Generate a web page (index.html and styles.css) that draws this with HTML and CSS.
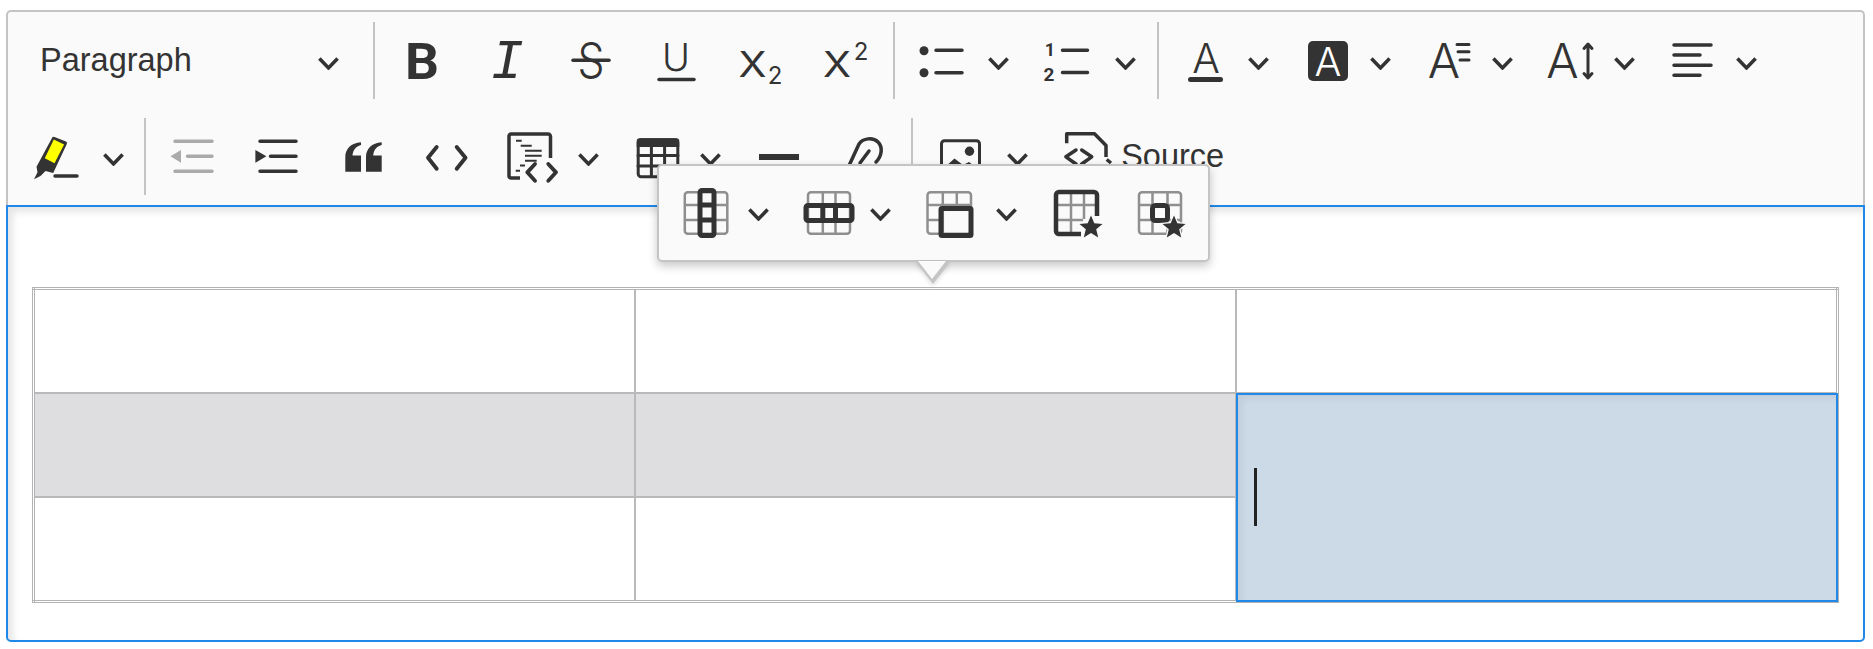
FILE: index.html
```html
<!DOCTYPE html>
<html lang="en">
<head>
    <meta charset="UTF-8">
    <title>Editor</title>
    <link rel="stylesheet" href="styles.css">
</head>
<body>
<svg class="sprite" aria-hidden="true">
    <symbol id="chev" viewBox="0 0 21 13"><path d="M1.400 1.600l9.100 9.300 9.100-9.300"/></symbol>
    <symbol id="star" viewBox="0 0 48 48" overflow="visible"><path class="star" d="M38 26.500l3.300 7.700 8.200.7-6.300 5.400 2 8.100-7.200-4.300-7.200 4.300 2-8.100-6.300-5.400 8.200-.7z"/></symbol>
</svg>

<div class="editor">
    <div class="toolbar">
        <div class="row">
            <div class="heading">
                <span>Paragraph</span>
                <svg class="chev"><use href="#chev"/></svg>
            </div>
            <i class="sep sep-first"></i>
            <div class="group">
                <div class="btn"><svg class="ico"><text class="fb" x="24" y="43" font-size="50" text-anchor="middle" textLength="34" lengthAdjust="spacingAndGlyphs">B</text></svg></div>
                <div class="btn"><svg class="ico"><text class="fi" x="24" y="42" font-size="55" text-anchor="middle">I</text></svg></div>
                <div class="btn"><svg class="ico"><text class="fl" x="24" y="42" font-size="49" text-anchor="middle" textLength="27" lengthAdjust="spacingAndGlyphs">S</text><path class="ln" d="M6 24.300h36"/></svg></div>
                <div class="btn"><svg class="ico"><text class="fl" x="24" y="35" font-size="38" text-anchor="middle">U</text><path class="ln" d="M7 43.500h35"/></svg></div>
                <div class="btn"><svg class="ico"><text class="fn" x="15.500" y="41" font-size="35" text-anchor="middle" textLength="28" lengthAdjust="spacingAndGlyphs">X</text><text class="fn" x="38" y="48" font-size="24" text-anchor="middle">2</text></svg></div>
                <div class="btn"><svg class="ico"><text class="fn" x="15" y="41" font-size="35" text-anchor="middle" textLength="28" lengthAdjust="spacingAndGlyphs">X</text><text class="fn" x="39" y="24" font-size="24" text-anchor="middle">2</text></svg></div>
            </div>
            <i class="sep sep-a"></i>
            <div class="group lists">
                <div class="dd">
                    <svg class="ico"><circle class="dot" cx="2" cy="14.700" r="4.500"/><circle class="dot" cx="2" cy="36.700" r="4.500"/><path class="ln" d="M14 14.300h26M14 36.700h26"/></svg>
                    <svg class="chev"><use href="#chev"/></svg>
                </div>
                <div class="dd">
                    <svg class="ico"><text class="fb" x="1" y="20" font-size="18" text-anchor="middle">1</text><text class="fb" x="0" y="45" font-size="19" text-anchor="middle">2</text><path class="ln" d="M13.500 14.300h25M13.500 36.500h25"/></svg>
                    <svg class="chev"><use href="#chev"/></svg>
                </div>
            </div>
            <i class="sep sep-b"></i>
            <div class="group fonts">
                <div class="dd">
                    <svg class="ico"><text class="fl" x="24" y="37" font-size="41" text-anchor="middle">A</text><rect class="fill" x="6" y="41" width="35" height="5" rx="2.500"/></svg>
                    <svg class="chev"><use href="#chev"/></svg>
                </div>
                <div class="dd">
                    <svg class="ico"><rect class="fill" x="4" y="5" width="40" height="40" rx="5"/><text class="fl white" x="24" y="40" font-size="40" text-anchor="middle">A</text></svg>
                    <svg class="chev"><use href="#chev"/></svg>
                </div>
                <div class="dd">
                    <svg class="ico"><text class="fl" x="18" y="42" font-size="48" text-anchor="middle">A</text><path class="ln thin" d="M31 8.500h12M32 15.800h11M34 24h9"/></svg>
                    <svg class="chev"><use href="#chev"/></svg>
                </div>
                <div class="dd">
                    <svg class="ico"><text class="fl" x="15.500" y="42" font-size="48" text-anchor="middle">A</text><path class="ln thin" d="M41 8.500v33M37 12.500l4-4.500 4 4.500M37 37.500l4 4.500 4-4.500"/></svg>
                    <svg class="chev"><use href="#chev"/></svg>
                </div>
                <div class="dd">
                    <svg class="ico"><path class="ln" d="M5 9h37M5 19h26M5 29.300h37M5 39.300h26"/></svg>
                    <svg class="chev"><use href="#chev"/></svg>
                </div>
            </div>
        </div>

        <div class="row">
            <div class="dd mark">
                <svg class="ico"><path class="fill" d="M15 6q.8-1.600 2.500-1l11.500 4.600q1.500.7.800 2.300L16.200 41l-7.700-2-5 5-6.500 3.300 3.500-7-1-5.600z"/><path class="yellow" d="M16.800 7.500l10.300 5-9.600 18.800-9.700-5z"/><path class="ln" d="M18 44h22"/></svg>
                <svg class="chev"><use href="#chev"/></svg>
            </div>
            <i class="sep sep-c"></i>
            <div class="group">
                <div class="btn"><svg class="ico"><path class="ln off" d="M7 9.300h37M19.500 24.300h24.500M7 39.300h37"/><path class="off-fill" d="M2.500 24.300L13 18v12.700z"/></svg></div>
                <div class="btn"><svg class="ico"><path class="ln" d="M7 9.300h36M17.500 24.300h25.500M7 39.300h36"/><path class="fill" d="M13.400 24.300L2.400 18v12.700z"/></svg></div>
                <div class="btn"><svg class="ico"><path class="fill" d="M7.300 39.700V25C7.300 17 13 11 23 10.300V13c-4 1-8 4-8.500 10.500H23v16.200z"/><path class="fill" d="M28 39.700V25c0-8 5.700-14 15.700-14.700V13c-4 1-8 4-8.500 10.500h8.500v16.200z"/></svg></div>
                <div class="btn"><svg class="ico"><path class="ln bold" d="M13.700 15L5 25.700l8.700 11M33.700 15l8.800 10.700-8.800 11"/></svg></div>
            </div>
            <div class="group snippet">
                <div class="dd">
                    <svg class="ico"><path class="ln sq" d="M38.500 26V4.500A2.500 2.500 0 0 0 36 2H-1A2.500 2.500 0 0 0-3 4.500v39A2.500 2.500 0 0 0-1 46h9"/><path class="ln hair" d="M4 8.700h5.700M8.700 13.700h11M13 18.700h16.700M13 23.700h16.700M13 28.700h11.700M8 33.500h5M3.700 38.700H8"/><path class="ln bold" d="M23 32l-7.700 8.300 7.700 8.400M36.300 32l7.700 8.300-7.700 8.400"/></svg>
                    <svg class="chev"><use href="#chev"/></svg>
                </div>
                <div class="dd">
                    <svg class="ico"><rect class="ln thin" x="4.200" y="7.800" width="39.600" height="37" rx="3"/><path class="fill" d="M2.700 15V9.300a3 3 0 0 1 3-3h36.600a3 3 0 0 1 3 3V15z"/><path class="ln thin" d="M17.400 14v30M30.600 14v30M4 23.500h40M4 34h40"/></svg>
                    <svg class="chev"><use href="#chev"/></svg>
                </div>
                <div class="btn btn-hr"><svg class="ico"><rect class="fill" x="4" y="22" width="40" height="6"/></svg></div>
                <div class="btn"><svg class="ico"><path class="ln" d="M7 38l12-26C23 6 33 5 38 10s4 14-2 20M20 31l9-12"/></svg></div>
            </div>
            <i class="sep sep-d"></i>
            <div class="dd picture">
                <svg class="ico"><rect class="ln thin" x="0.500" y="8.800" width="38" height="36" rx="3"/><circle class="dot" cx="28.500" cy="19.300" r="4.700"/><path class="fill" d="M3 36l10.500-9.500L22 33l6-3 9 7v6H3z"/></svg>
                <svg class="chev"><use href="#chev"/></svg>
            </div>
            <div class="source">
                <svg class="ico"><path class="ln sq" d="M2.700 11.300V1.800h27.800L42 13.500v11.500M42.700 27.500l4.300 3.500"/><path class="ln" d="M12 18L1.900 24.800 12 32M17.700 18l10 6.800-10 7.200"/></svg>
                <span>Source</span>
            </div>
        </div>
    </div>

    <div class="editable">
        <table class="grid">
            <tr><td></td><td></td><td></td></tr>
            <tr class="picked"><td></td><td></td><td class="cell-on" rowspan="2"><i class="caret"></i></td></tr>
            <tr><td></td><td></td></tr>
        </table>
    </div>

    <!-- table toolbar, sits over the editor -->
    <div class="balloon">
        <div class="dd">
            <svg class="ico"><g class="soft"><rect x="2.800" y="3.300" width="42.500" height="41.500" rx="3"/><path d="M4 16h40M4 31h40"/></g><rect class="heavy" x="18" y="1.500" width="14" height="45" rx="2"/><path class="heavy" d="M18 16h14M18 31h14"/></svg>
            <svg class="chev"><use href="#chev"/></svg>
        </div>
        <div class="dd">
            <svg class="ico"><g class="soft"><rect x="4" y="3.300" width="42" height="41.500" rx="3"/><path d="M18.800 4v40M31.500 4v40"/></g><rect class="heavy" x="2" y="16.500" width="46" height="15" rx="2"/><path class="heavy" d="M18.800 16.500v15M31.500 16.500v15"/></svg>
            <svg class="chev"><use href="#chev"/></svg>
        </div>
        <div class="dd dd-merge">
            <svg class="ico"><g class="soft"><rect x="-2.500" y="3.300" width="43.500" height="41.500" rx="3"/><path d="M12.800 4v40M26.800 4v15M-2 16h43M-2 31h12"/></g><rect class="heavy" x="11" y="19.500" width="30" height="27" rx="1"/></svg>
            <svg class="chev"><use href="#chev"/></svg>
        </div>
        <div class="btn btn-tp"><svg class="ico"><path class="soft" d="M18 4v39M31 4v26M4 16h40M4 31h26"/><path class="heavy thick" d="M44 27V6a3 3 0 0 0-3-3H6a3 3 0 0 0-3 3v36a3 3 0 0 0 3 3h22"/><use href="#star" width="48" height="48"/></svg></div>
        <div class="btn btn-cp"><svg class="ico"><g class="soft"><rect x="3" y="3.300" width="42" height="41.500" rx="3"/><path d="M16.500 4v40M31.500 4v40M4 16h40M4 31h40"/></g><rect class="heavy" x="16.500" y="16.500" width="15" height="15" rx="3"/><use href="#star" width="48" height="48"/></svg></div>
        <i class="tip"></i>
    </div>
</div>
</body>
</html>
```

FILE: styles.css
```css
body {
    margin: 0;
    padding: 10px 8px 8px 6px;
    background: white;
    color: #333;
    font-family: "Liberation Sans", Arial, sans-serif;
    overflow: hidden;
}
.sprite {
    position: absolute;
    width: 0;
    height: 0;
}
.editor {
    position: relative;
}
.toolbar {
    background: #fafafa;
    border: 2px solid #c4c4c4;
    border-bottom: none;
    border-radius: 5px 5px 0 0;
    height: 193px;
}
.row {
    display: flex;
    align-items: center;
    height: 96px;
    font-size: 32.5px;
}
.group {
    display: flex;
    align-items: center;
}
.heading {
    display: flex;
    align-items: center;
    justify-content: space-between;
    width: 365px;
    padding: 0 34px 0 32px;
    box-sizing: border-box;
}
.btn {
    display: flex;
    justify-content: center;
    width: 84.8px;
    flex-shrink: 0;
}
.dd {
    display: flex;
    align-items: center;
    width: 122px;
    padding-left: 17px;
    box-sizing: border-box;
    flex-shrink: 0;
}
.ico {
    width: 48px;
    height: 48px;
    overflow: visible;
    flex-shrink: 0;
}
.chev {
    width: 21px;
    height: 13px;
    margin-left: 18.5px;
    margin-top: 6px;
    flex-shrink: 0;
    fill: none;
    stroke: #333;
    stroke-width: 3.6;
}

/* toolbar separators */
.sep {
    display: block;
    width: 2px;
    height: 77px;
    background: #c4c4c4;
    flex-shrink: 0;
}
.sep-first { margin-right: 4.5px; }
.sep-a { margin-left: 4.7px; }
.sep-b { margin-left: 3px; }
.sep-c { margin-left: 2.5px; margin-right: 4.1px; }
.sep-d { margin-left: 5px; }

.lists { margin-left: 10px; gap: 5px; }
.fonts { margin-left: 6px; gap: 0; }
.fonts .dd { width: 121.8px; }
.mark { margin-left: 11.5px; }
.snippet { margin-left: 5.7px; }
.btn-hr { margin-left: -2.4px; }
.picture { margin-left: 10.5px; }
.source {
    display: flex;
    align-items: center;
    margin-left: 18.5px;
    gap: 9px;
}

/* svg parts */
.ln {
    fill: none;
    stroke: #333;
    stroke-width: 3.5;
    stroke-linecap: round;
    stroke-linejoin: round;
}
.thin { stroke-width: 3; }
.bold { stroke-width: 3.9; }
.hair { stroke-width: 2; stroke-linecap: butt; }
.sq { stroke-linecap: butt; }
.off { stroke: #aaa; }
.off-fill { fill: #aaa; }
.fill, .dot { fill: #333; }
.yellow { fill: #ffff00; }
.white { fill: white; }
.fb { font-family: Roboto, sans-serif; font-weight: 700; fill: #333; }
.fl { font-family: Inter, sans-serif; font-weight: 300; fill: #333; }
.fn { font-family: Inter, sans-serif; font-weight: 400; fill: #333; }
.fi { font-family: "Liberation Mono", monospace; font-style: italic; fill: #333; }
.fl.white { fill: white; }
.soft {
    fill: none;
    stroke: #8f8f8f;
    stroke-width: 2.5;
}
.heavy {
    fill: none;
    stroke: #333;
    stroke-width: 5;
}
.heavy.thick { stroke-width: 4.5; }
.star {
    fill: #333;
    stroke: #fafafa;
    stroke-width: 2.5;
    paint-order: stroke;
}

/* content */
.editable {
    background: white;
    border: 2px solid #2088e8;
    border-radius: 0 0 5px 5px;
    padding: 80px 24px 37px 24px;
    box-shadow: inset 5px 5px 7px rgba(0, 0, 0, 0.1);
}
.grid {
    width: 100%;
    border-collapse: collapse;
    border: 3px double #b3b3b3;
    table-layout: fixed;
}
.grid td {
    height: 102px;
    padding: 0;
    border: 2px solid #b9b9b9;
}
.picked td {
    background: #dedee0;
}
.grid .cell-on {
    background: #ccd9e7;
    padding-left: 17px;
    outline: 2px solid #2088e8;
    outline-offset: -2px;
    box-shadow: inset 5px 5px 7px rgba(0, 0, 0, 0.06);
}
.caret {
    display: block;
    width: 3px;
    height: 58px;
    background: #222;
}

/* balloon */
.balloon {
    position: absolute;
    left: 651px;
    top: 154px;
    width: 553px;
    height: 98px;
    box-sizing: border-box;
    display: flex;
    align-items: center;
    padding-left: 5.5px;
    background: #fafafa;
    border: 2px solid #c4c4c4;
    border-radius: 5px;
    box-shadow: 0 4px 10px rgba(0, 0, 0, 0.22);
}
.balloon .chev { margin-top: 3px; }
.dd-merge { margin-left: 4px; }
.btn-cp { margin-left: -1.5px; }
.tip {
    position: absolute;
    left: 256.500px;
    top: 96px;
    width: 0;
    height: 0;
    border-left: 17.5px solid transparent;
    border-right: 17.5px solid transparent;
    border-top: 22px solid #c4c4c4;
    filter: drop-shadow(0 2px 2px rgba(0, 0, 0, 0.14));
}
.tip::after {
    content: "";
    position: absolute;
    left: -14.5px;
    top: -23px;
    border-left: 14.5px solid transparent;
    border-right: 14.5px solid transparent;
    border-top: 18.5px solid #fafafa;
}
```
